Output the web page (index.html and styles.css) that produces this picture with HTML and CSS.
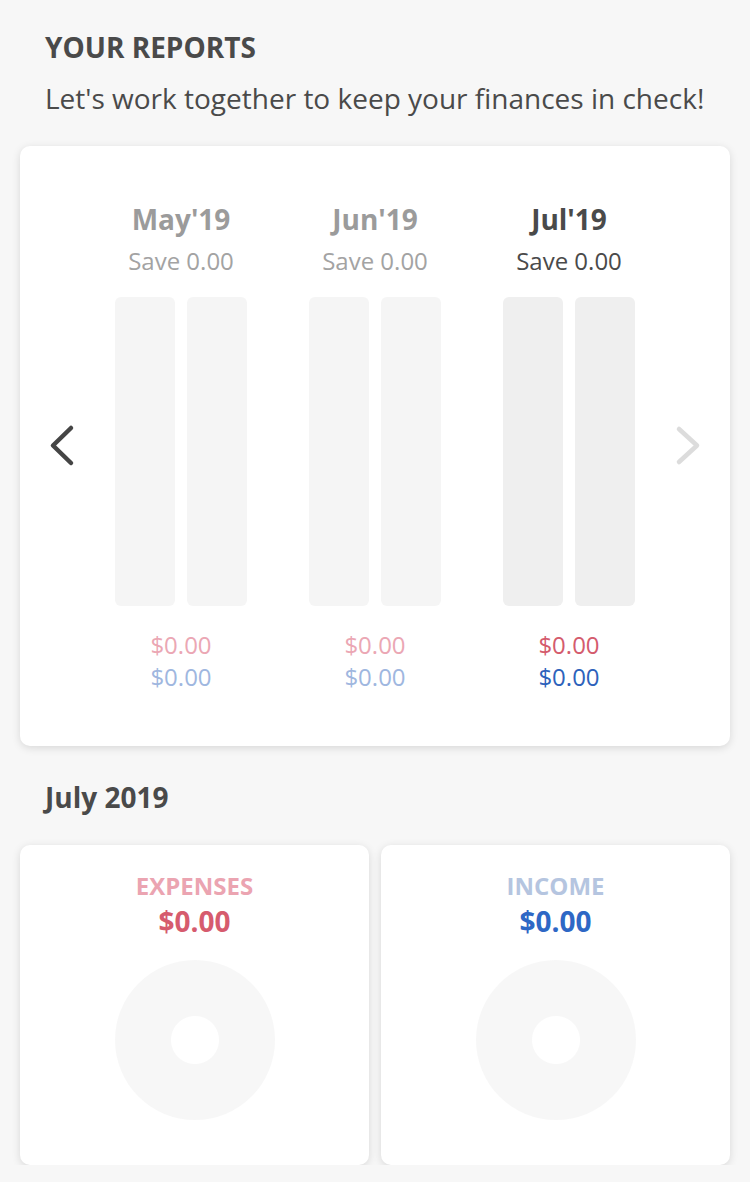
FILE: index.html
```html
<!DOCTYPE html>
<html>
<head>
<meta charset="utf-8">
<link rel="stylesheet" href="styles.css">
</head>
<body>
<div class="page">
  <h1 class="title">YOUR REPORTS</h1>
  <p class="subtitle">Let's work together to keep your finances in check!</p>

  <section class="card chart-card">
    <div class="arrow arrow-left">
      <svg width="64" height="48" viewBox="0 0 64 48"><polyline points="51,5 33,22.5 51,40" fill="none" stroke="#454545" stroke-width="4.5" stroke-linecap="round" stroke-linejoin="round"/></svg>
    </div>
    <div class="months">
      <div class="month">
        <div class="month-name">May'19</div>
        <div class="month-save">Save 0.00</div>
        <div class="bars"><div class="bar"></div><div class="bar"></div></div>
        <div class="val exp">$0.00</div>
        <div class="val inc">$0.00</div>
      </div>
      <div class="month">
        <div class="month-name">Jun'19</div>
        <div class="month-save">Save 0.00</div>
        <div class="bars"><div class="bar"></div><div class="bar"></div></div>
        <div class="val exp">$0.00</div>
        <div class="val inc">$0.00</div>
      </div>
      <div class="month active">
        <div class="month-name">Jul'19</div>
        <div class="month-save">Save 0.00</div>
        <div class="bars"><div class="bar"></div><div class="bar"></div></div>
        <div class="val exp">$0.00</div>
        <div class="val inc">$0.00</div>
      </div>
    </div>
    <div class="arrow arrow-right">
      <svg width="64" height="48" viewBox="0 0 64 48"><polyline points="13,6 31,22.5 13,39" fill="none" stroke="#dcdcdc" stroke-width="4.5" stroke-linecap="round" stroke-linejoin="round"/></svg>
    </div>
  </section>

  <h2 class="period">July 2019</h2>

  <div class="summary">
    <section class="card sum-card">
      <div class="sum-label exp-label">EXPENSES</div>
      <div class="sum-amount exp-amount">$0.00</div>
      <div class="donut"></div>
    </section>
    <section class="card sum-card">
      <div class="sum-label inc-label">INCOME</div>
      <div class="sum-amount inc-amount">$0.00</div>
      <div class="donut"></div>
    </section>
  </div>
</div>
</body>
</html>
```

FILE: styles.css
```css
* { box-sizing: border-box; }
html, body {
  margin: 0;
  padding: 0;
  background: #f7f7f7;
  font-family: "Open Sans", "Liberation Sans", sans-serif;
  color: #4a4a4a;
}
.page {
  padding: 28px 20px 0;
}
.title {
  margin: 0 0 0 25px;
  font-size: 28px;
  line-height: 38px;
  font-weight: 700;
  color: #4a4a4a;
}
.subtitle {
  margin: 14px 0 0 25px;
  font-size: 28px;
  line-height: 36px;
  font-weight: 400;
  color: #4a4a4a;
}
.card {
  background: #fff;
  border-radius: 10px;
  box-shadow: 0 2px 8px rgba(0, 0, 0, 0.13);
}
.chart-card {
  margin-top: 30px;
  display: flex;
  align-items: center;
  padding: 54px 0 53px;
}
.arrow {
  width: 64px;
  flex: none;
  display: flex;
}
.arrow svg { display: block; }
.months {
  display: flex;
  flex: 1;
}
.month {
  width: 194px;
  display: flex;
  flex-direction: column;
  align-items: center;
}
.month-name {
  font-size: 28px;
  line-height: 38px;
  font-weight: 700;
  color: #9b9b9b;
}
.month-save {
  margin-top: 7px;
  font-size: 24px;
  line-height: 32px;
  color: #a3a3a3;
}
.bars {
  margin-top: 20px;
  display: flex;
  gap: 12px;
}
.bar {
  width: 60px;
  height: 309px;
  border-radius: 6px;
  background: #f5f5f5;
}
.val {
  font-size: 24px;
  line-height: 32px;
}
.val.exp { margin-top: 23px; color: #eba7b4; }
.val.inc { color: #9fb7df; }
.month.active .month-name { color: #4a4a4a; }
.month.active .month-save { color: #4a4a4a; }
.month.active .bar { background: #efefef; }
.month.active .val.exp { color: #d45b6d; }
.month.active .val.inc { color: #2d62bb; }

.period {
  margin: 32px 0 0 25px;
  font-size: 28px;
  line-height: 38px;
  font-weight: 700;
  color: #4a4a4a;
}
.summary {
  margin-top: 29px;
  display: flex;
  gap: 12px;
}
.sum-card {
  flex: 1;
  height: 320px;
  padding-top: 25px;
  display: flex;
  flex-direction: column;
  align-items: center;
}
.sum-label {
  font-size: 24px;
  line-height: 32px;
  font-weight: 700;
}
.sum-amount {
  font-size: 28px;
  line-height: 38px;
  font-weight: 700;
}
.exp-label { color: #eba4b1; }
.exp-amount { color: #d65b6e; }
.inc-label { color: #b5c5e0; }
.inc-amount { color: #2e67c5; }
.donut {
  margin-top: 20px;
  width: 160px;
  height: 160px;
  border-radius: 50%;
  background: radial-gradient(circle, #fff 23.5px, #f7f7f7 24.5px);
}
```
